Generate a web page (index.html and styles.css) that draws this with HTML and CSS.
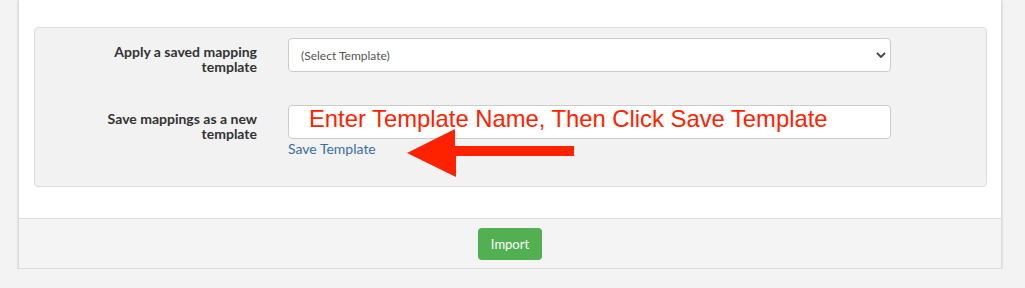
FILE: index.html
```html
<!DOCTYPE html>
<html lang="en">
<head>
    <meta charset="UTF-8">
    <title>Import mappings</title>
    <link rel="stylesheet" href="styles.css">
</head>
<body>
    <div class="panel">
        <div class="panel-body">
            <div class="well">
                <div class="form-row">
                    <label class="form-label" for="templateSelect">Apply a saved mapping template</label>
                    <div class="form-field">
                        <select id="templateSelect" class="form-control">
                            <option>(Select Template)</option>
                        </select>
                    </div>
                </div>
                <div class="form-row">
                    <label class="form-label" for="templateName">Save mappings as a new template</label>
                    <div class="form-field">
                        <input type="text" id="templateName" class="form-control note-input" value="Enter Template Name, Then Click Save Template">
                        <a href="#" class="save-link">Save Template</a>
                        <!-- annotation arrow -->
                        <svg class="note-arrow" width="168" height="50" viewBox="0 0 168 50">
                            <polygon points="0,25 48,1 48,18 167,18 167,28 49,28 49,49" fill="#ff2200"/>
                        </svg>
                    </div>
                </div>
            </div>
        </div>
        <div class="panel-footer">
            <button class="btn-import">Import</button>
        </div>
    </div>
</body>
</html>
```

FILE: styles.css
```css
body {
    margin: 0;
    padding: 0 23px 0 18px;
    background-color: #f3f3f3;
    font-family: 'Lato', 'Liberation Sans', sans-serif;
    font-size: 13px;
    color: #333;
}
.panel {
    background-color: white;
    border: 1px solid #dcdcdc;
    border-top: none;
    box-shadow: 0 1px 2px rgba(0, 0, 0, 0.2);
}
.panel-body {
    padding: 27px 14px 31px 15px;
}
.well {
    background-color: #f2f2f2;
    border: 1px solid #dddddd;
    border-radius: 4px;
    padding: 10px 0 29px 57px;
}
.form-row {
    display: grid;
    grid-template-columns: 165px 603px;
    column-gap: 31px;
}
.form-row + .form-row {
    margin-top: 31px;
}
.form-label {
    text-align: right;
    font-size: 14px;
    font-weight: bold;
    line-height: 15px;
    padding-top: 6px;
    color: #333;
}
.form-field {
    position: relative;
}
.form-control {
    display: block;
    width: 100%;
    height: 34px;
    box-sizing: border-box;
    border: 1px solid #cccccc;
    border-radius: 4px;
    background-color: white;
    font-family: 'Lato', 'Liberation Sans', sans-serif;
    font-size: 12px;
    color: #555;
    padding: 0 12px;
    margin: 0;
}
select.form-control {
    appearance: none;
    -webkit-appearance: none;
    background-image: url("data:image/svg+xml,%3Csvg xmlns='http://www.w3.org/2000/svg' width='10' height='6' viewBox='0 0 10 6'%3E%3Cpath d='M1 1l4 4 4-4' fill='none' stroke='%23444' stroke-width='1.8'/%3E%3C/svg%3E");
    background-repeat: no-repeat;
    background-position: right 4px center;
}
.note-input {
    font-family: 'Liberation Sans', Arial, sans-serif;
    font-size: 23.8px;
    color: #ff2200;
    padding: 0 0 6px 20px;
}
.save-link {
    display: inline-block;
    margin-top: 1px;
    font-size: 14px;
    color: #3a6ea5;
    text-decoration: none;
}
.note-arrow {
    position: absolute;
    left: 119px;
    top: 23px;
}
.panel-footer {
    background-color: #f4f4f4;
    border-top: 1px solid #dddddd;
    padding: 9px 0 8px;
    text-align: center;
}
.btn-import {
    width: 64px;
    height: 32px;
    background-color: #52af52;
    color: white;
    border: none;
    border-radius: 4px;
    font-family: 'Lato', 'Liberation Sans', sans-serif;
    font-size: 13px;
    cursor: pointer;
    padding: 0;
}
```
